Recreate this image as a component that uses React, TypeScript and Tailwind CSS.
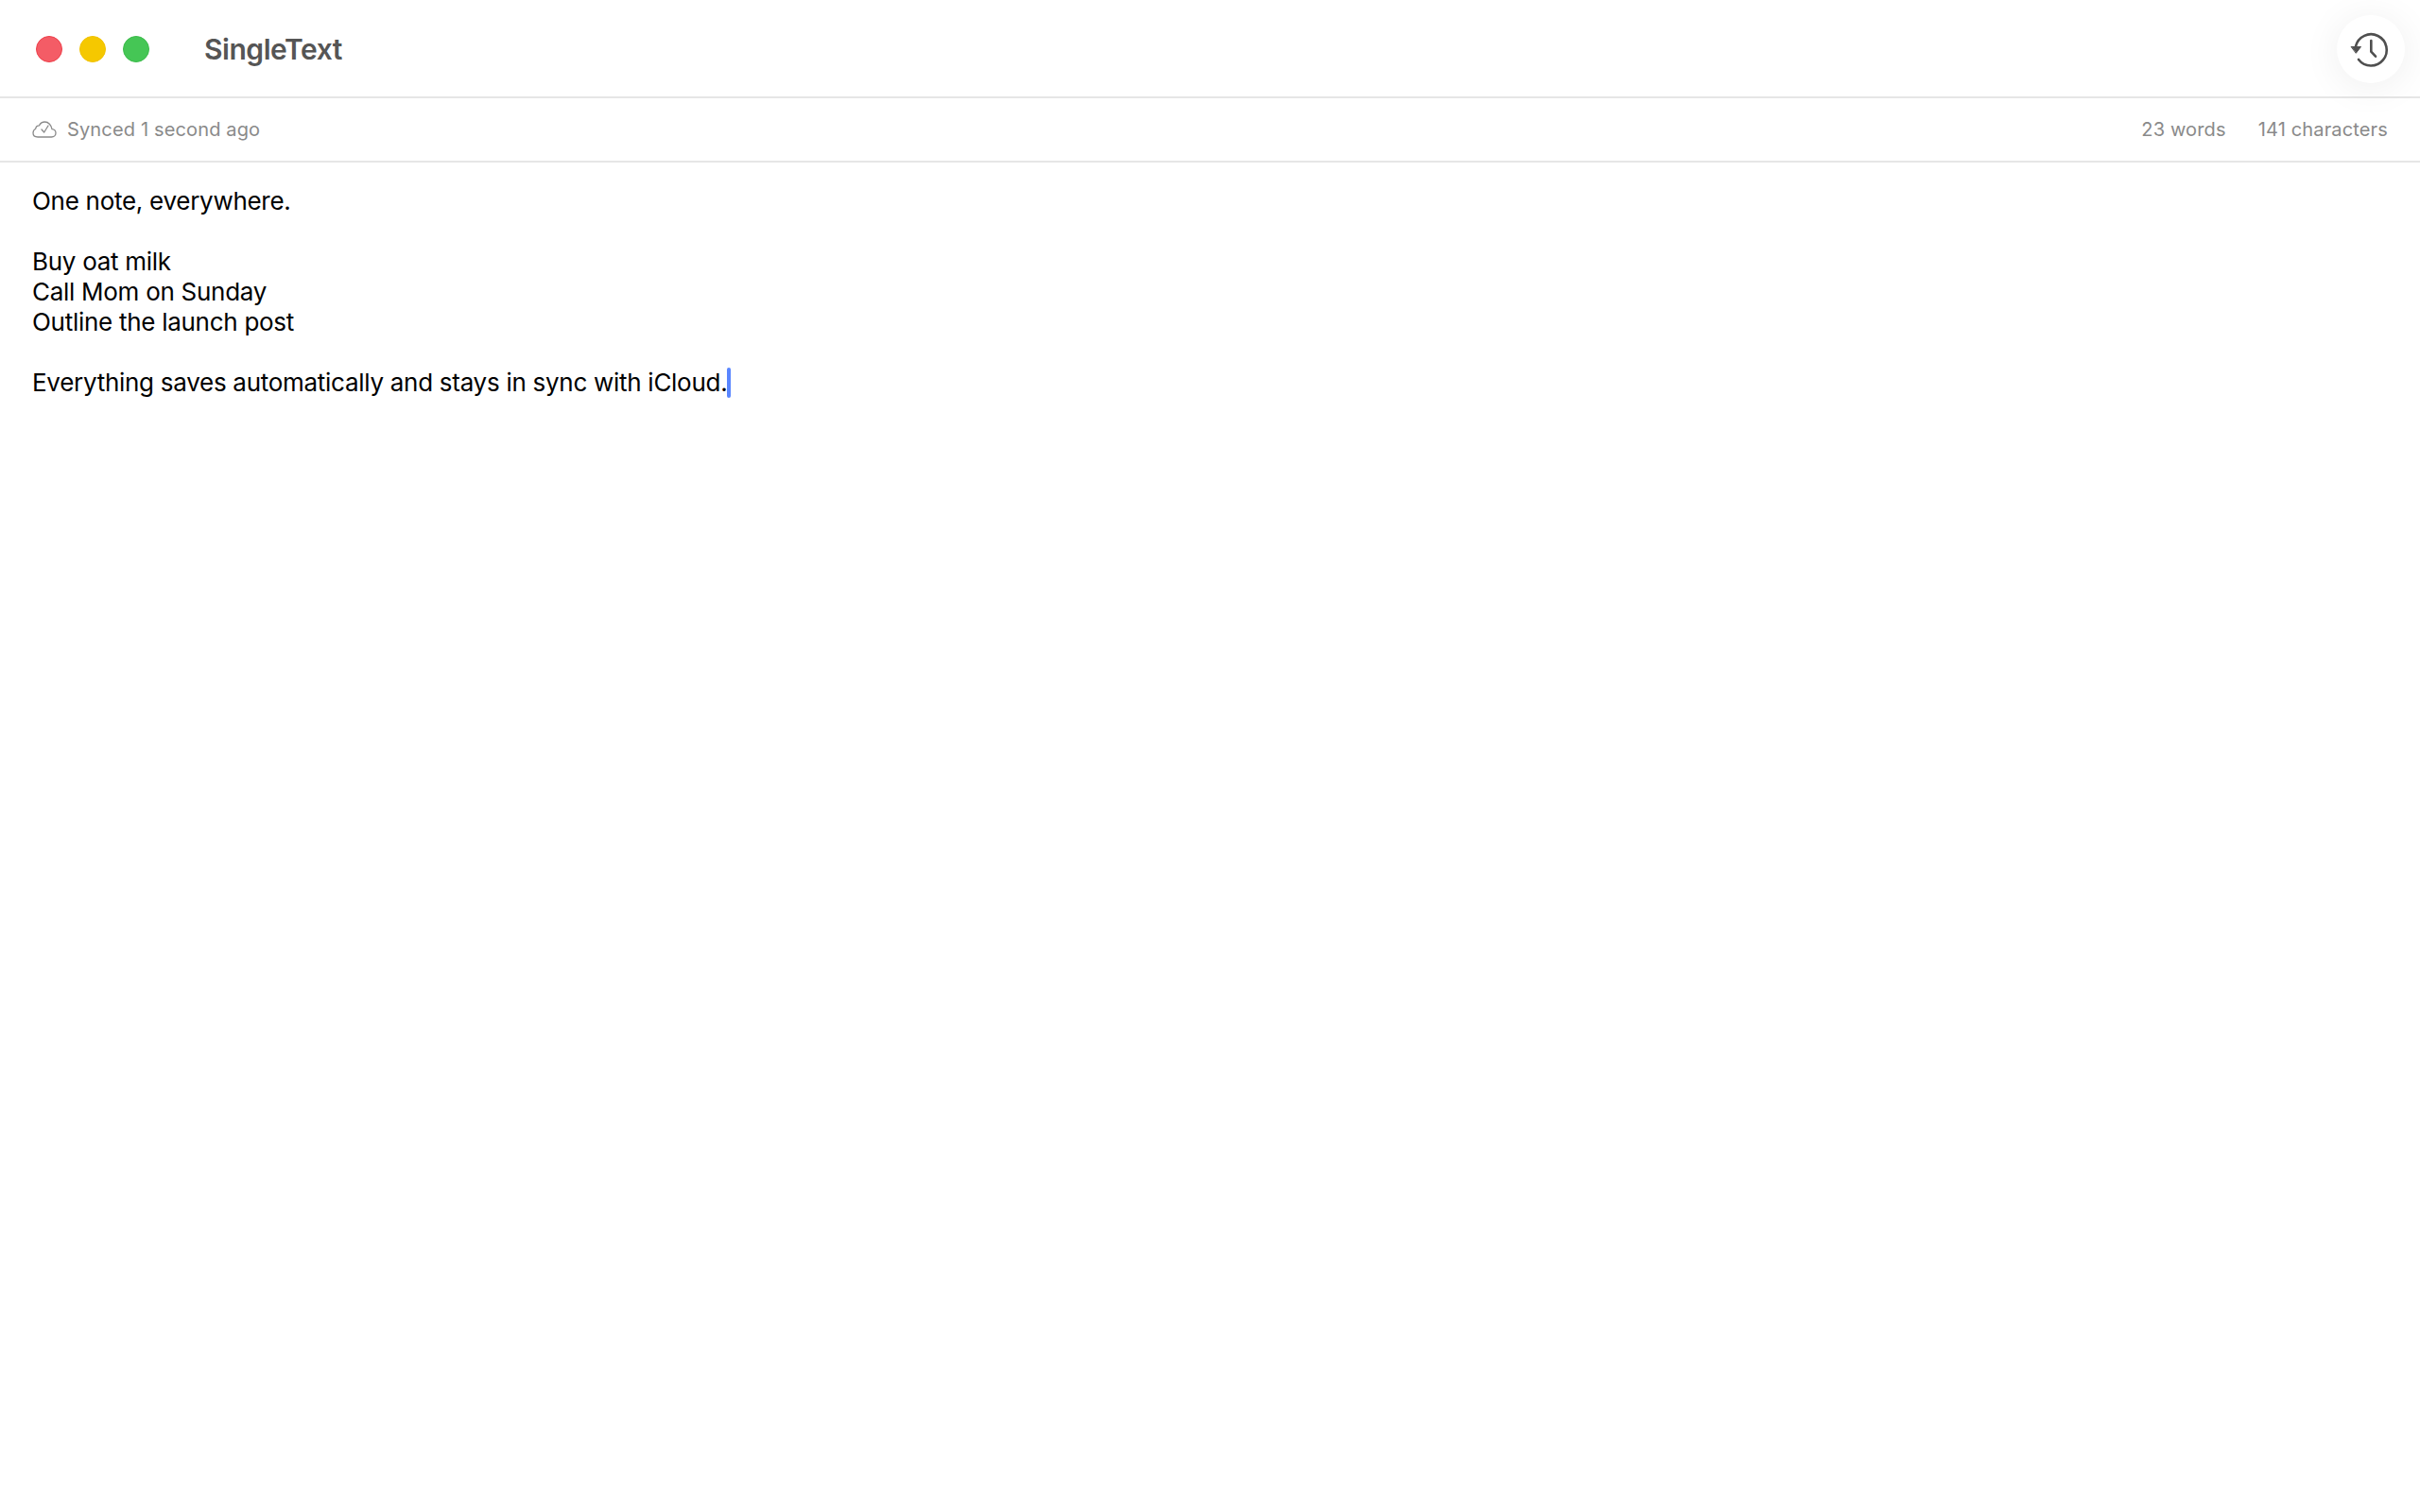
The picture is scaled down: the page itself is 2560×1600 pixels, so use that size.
const noteLines = [
  "One note, everywhere.",
  "",
  "Buy oat milk",
  "Call Mom on Sunday",
  "Outline the launch post",
  "",
  "Everything saves automatically and stays in sync with iCloud.",
];

function CloudCheckIcon() {
  return (
    <svg width="26" height="18" viewBox="0 0 26 18" fill="none" stroke="#8a8a8a" strokeWidth="1.3" strokeLinecap="round" strokeLinejoin="round">
      <path d="M6 17h14.500c2.600 0 4.500-1.800 4.500-4.200 0-2.300-1.700-4-4-4.200C20.300 4.400 17.200 1 13.500 1 10.800 1 8.700 2.400 7.500 4.800 5.500 4.800 3.900 6.300 3.700 8.300 2 9.200 1 10.900 1 12.800 1 15.200 3 17 6 17z" />
      <path d="M10 9l2.700 3L17 5" />
    </svg>
  );
}

function HistoryIcon() {
  return (
    <svg width="52" height="48" viewBox="0 0 52 48" fill="none" stroke="#4f4f4f" strokeWidth="2.6" strokeLinecap="round" strokeLinejoin="round">
      <path d="M10 21A16.600 16.600 0 1 1 13 35" />
      <path d="M5.500 21.500h10l-5 6.500z" fill="#4f4f4f" strokeWidth="1" />
      <path d="M26.300 15v11.700l4.700 5" />
    </svg>
  );
}

function App() {
  return (
    <div className="relative min-h-screen bg-white font-['Inter','Liberation_Sans',sans-serif] antialiased">
      {/* Title bar */}
      <header className="flex h-[104px] items-center border-b-2 border-[#e6e6e6] pt-0.5 pl-[38px]">
        <div className="flex gap-[18px]">
          <span className="size-7 rounded-full border border-[#ee3f4a] bg-[#f45c66]" />
          <span className="size-7 rounded-full border border-[#f2c200] bg-[#f5c800]" />
          <span className="size-7 rounded-full border border-[#3cbc4b] bg-[#45c655]" />
        </div>
        <h1 className="ml-[58px] text-[30px] leading-none font-semibold tracking-[-0.45px] text-[#555555]">SingleText</h1>
      </header>

      {/* History button */}
      <button className="absolute top-4 right-4 flex size-[72px] items-center justify-center rounded-full bg-white shadow-[0_4px_40px_rgba(0,0,0,0.07)]">
        <HistoryIcon />
      </button>

      {/* Status bar */}
      <div className="flex h-[68px] items-center justify-between border-b-2 border-[#e6e6e6] px-[34px] text-[20px] tracking-[0.15px] text-[#8a8a8a]">
        <div className="flex items-center gap-[11px]">
          <CloudCheckIcon />
          <span>Synced 1 second ago</span>
        </div>
        <div className="flex gap-[34px]">
          <span>23 words</span>
          <span>141 characters</span>
        </div>
      </div>

      {/* Note */}
      <main className="px-[34px] pt-[25px] text-[26px] leading-8 tracking-[-0.28px] text-black">
        {noteLines.map((line, i) => (
          <p key={i} className="h-8">
            {line}
            {i === noteLines.length - 1 && (
              <span className="inline-block h-8 w-1 rounded-full bg-[#5a86ff] align-top" />
            )}
          </p>
        ))}
      </main>
    </div>
  );
}

export default App;
